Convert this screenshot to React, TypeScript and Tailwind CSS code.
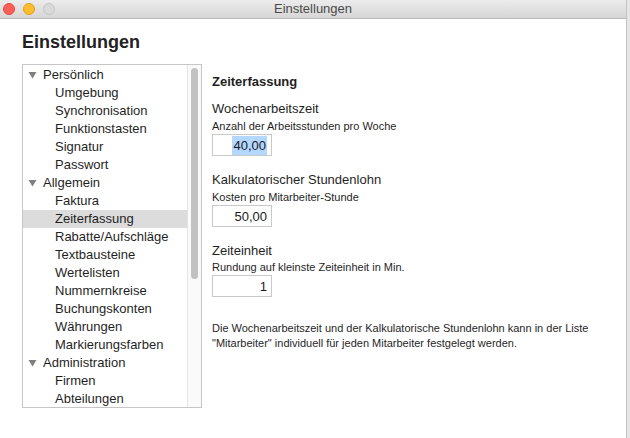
import React from "react";

const groups: { title: string; items: string[] }[] = [
  { title: "Persönlich", items: ["Umgebung", "Synchronisation", "Funktionstasten", "Signatur", "Passwort"] },
  {
    title: "Allgemein",
    items: [
      "Faktura",
      "Zeiterfassung",
      "Rabatte/Aufschläge",
      "Textbausteine",
      "Wertelisten",
      "Nummernkreise",
      "Buchungskonten",
      "Währungen",
      "Markierungsfarben",
    ],
  },
  { title: "Administration", items: ["Firmen", "Abteilungen"] },
];

function Tri() {
  return (
    <svg width="9" height="8" viewBox="0 0 9 8" className="shrink-0">
      <polygon points="0.5,1 8.5,1 4.5,7.5" fill="#7f7f7f" />
    </svg>
  );
}

function Field({ value, selected }: { value: string; selected?: boolean }) {
  return (
    <div className="mt-[1px] flex h-[22px] w-[60px] items-center justify-end border border-[#c9c9c9] bg-white pr-[4px] text-[13px] text-[#1a1a1a]">
      <span className={selected ? "bg-[#b3d7ff] px-[1px] leading-[19px]" : "leading-[19px]"}>{value}</span>
    </div>
  );
}

export default function App() {
  return (
    <div className="flex h-[438px] w-[630px] bg-[#e6e6e6] font-['Liberation_Sans',Arial,sans-serif]">
      <div className="flex h-full w-[627px] flex-col border-r border-[#c4c4c4] bg-white">
        <div className="relative flex h-[19px] shrink-0 items-center justify-center border-b border-[#b9b9b9] bg-gradient-to-b from-[#ececec] to-[#d6d6d6]">
          <div className="absolute left-[3px] top-[3px] flex gap-[8px]">
            <span className="h-[12px] w-[12px] rounded-full border border-[#e2463f] bg-[#fe5f57]" />
            <span className="h-[12px] w-[12px] rounded-full border border-[#e1a116] bg-[#febc2e]" />
            <span className="h-[12px] w-[12px] rounded-full border border-[#c6c6c6] bg-[#d9d9d9]" />
          </div>
          <span className="text-[13px] leading-[16px] text-[#4a4a4a]">Einstellungen</span>
        </div>
        <div className="flex flex-col px-[22px]">
          <h1 className="mt-[12px] text-[18px] font-bold leading-[22px] text-[#222]">Einstellungen</h1>
          <div className="mt-[11px] flex">
            <div className="flex h-[344px] w-[180px] border border-[#c6c6c6] bg-white">
              <div className="flex flex-1 flex-col overflow-hidden pt-[1px] text-[13px] text-[#1f1f1f]">
                {groups.map((g) => (
                  <React.Fragment key={g.title}>
                    <div className="flex h-[18px] shrink-0 items-center gap-[6px] pl-[5px] leading-[18px]">
                      <Tri />
                      <span>{g.title}</span>
                    </div>
                    {g.items.map((it) => (
                      <div
                        key={it}
                        className={
                          "flex h-[18px] shrink-0 items-center pl-[32px] leading-[18px] " +
                          (it === "Zeiterfassung" ? "bg-[#dcdcdc]" : "")
                        }
                      >
                        {it}
                      </div>
                    ))}
                  </React.Fragment>
                ))}
              </div>
              <div className="w-[14px] shrink-0 border-l border-[#e4e4e4] bg-[#fafafa] px-[3px] pt-[3px]">
                <div className="h-[211px] w-[7px] rounded-full bg-[#c2c2c2]" />
              </div>
            </div>
            <div className="ml-[10px] flex flex-col pt-[10px] text-[#1f1f1f]">
              <div className="text-[13px] font-bold leading-[16px]">Zeiterfassung</div>
              <div className="mt-[11px] text-[13px] leading-[16px]">Wochenarbeitszeit</div>
              <div className="mt-[2px] text-[11px] leading-[14px]">Anzahl der Arbeitsstunden pro Woche</div>
              <Field value="40,00" selected />
              <div className="mt-[16px] text-[13px] leading-[16px]">Kalkulatorischer Stundenlohn</div>
              <div className="mt-[2px] text-[11px] leading-[14px]">Kosten pro Mitarbeiter-Stunde</div>
              <Field value="50,00" />
              <div className="mt-[16px] text-[13px] leading-[16px]">Zeiteinheit</div>
              <div className="mt-[1px] text-[11px] leading-[14px]">Rundung auf kleinste Zeiteinheit in Min.</div>
              <Field value="1" />
              <div className="mt-[24px] text-[11px] leading-[15px]">
                Die Wochenarbeitszeit und der Kalkulatorische Stundenlohn kann in der Liste
                <br />
                "Mitarbeiter" individuell für jeden Mitarbeiter festgelegt werden.
              </div>
            </div>
          </div>
        </div>
      </div>
    </div>
  );
}
